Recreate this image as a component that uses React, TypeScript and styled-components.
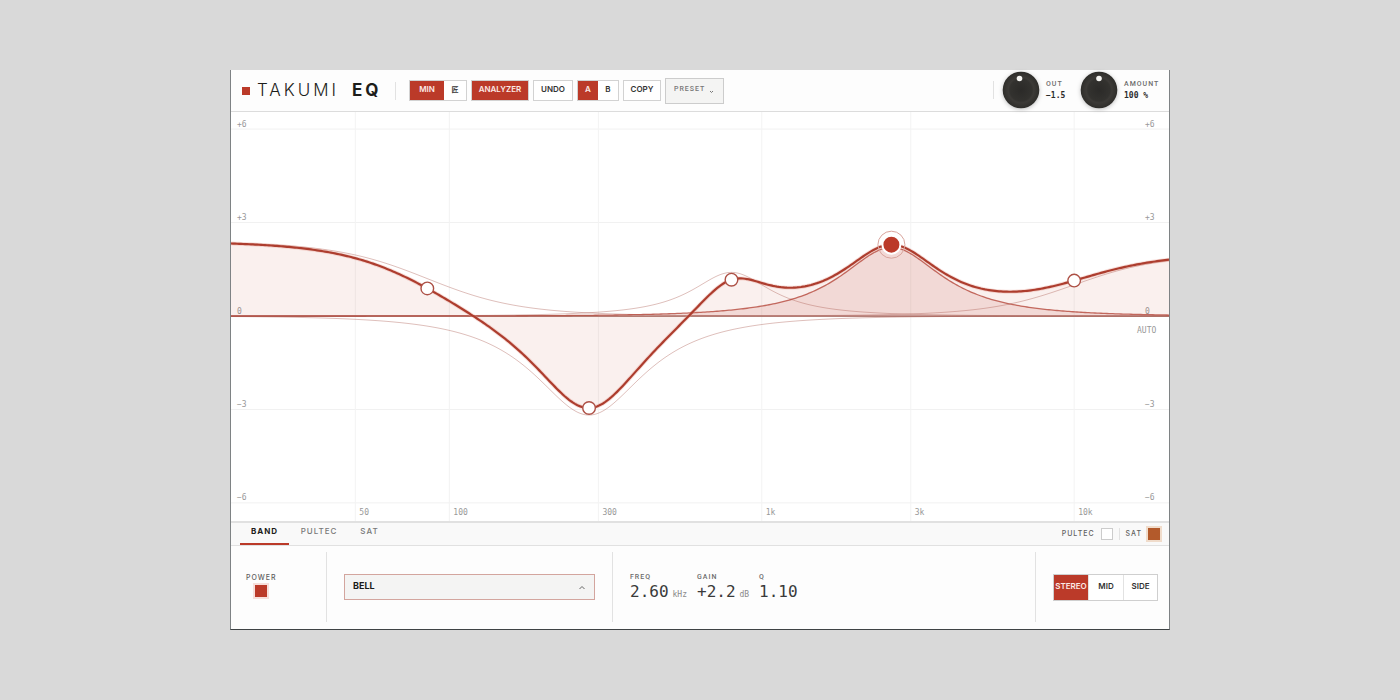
import React from "react";
import styled, { createGlobalStyle, css } from "styled-components";

const sans = `Inter, "Liberation Sans", "Noto Sans CJK JP", sans-serif`;
const label = `Roboto, "Liberation Sans", sans-serif`;
const mono = `"DejaVu Sans Mono", "Liberation Mono", monospace`;
const red = "#bb3a29";

const GlobalStyle = createGlobalStyle`
  *, *::before, *::after { box-sizing: border-box; }
  body { margin: 0; background: #d9d9d9; font-family: ${sans}; color: #1d1d1b; }
  button, select, input { font: inherit; color: inherit; margin: 0; border-radius: 0; }
`;

const Stage = styled.main`
  min-height: 100vh;
  display: flex;
  align-items: center;
  justify-content: center;
`;

const Plugin = styled.section`
  width: 100%;
  max-width: 940px;
  background: #fdfdfd;
  border: 1px solid #7e8284;
  border-top: 0;
  border-bottom-color: #3e4244;
`;

const Header = styled.header`
  display: flex;
  align-items: center;
  height: 42px;
  padding: 0 12px 0 11px;
  border-bottom: 1px solid #dcdcdc;
`;

const LogoMark = styled.span`
  width: 8px;
  height: 8px;
  margin-right: 7px;
  background: ${red};
`;

const Title = styled.h1`
  margin: 0;
  padding-bottom: 2px;
  width: 138px;
  font-size: 17px;
  line-height: 20px;
  font-weight: 300;
  letter-spacing: 3px;
  white-space: nowrap;
  strong { margin-left: 5px; font-weight: 700; }
`;

const Rule = styled.span<{ $tall?: boolean }>`
  width: 1px;
  height: ${(p) => (p.$tall ? "auto" : "18px")};
  align-self: ${(p) => (p.$tall ? "stretch" : "center")};
  background: #e2e2e2;
`;

const Tools = styled.div`
  display: flex;
  align-items: center;
  gap: 4px;
  margin-left: 13px;
`;

const Group = styled.div`
  display: flex;
  border: 1px solid #d2d2d2;
  background: #ffffff;
`;

const ToolButton = styled.button<{ $w: number; $on?: boolean; $bare?: boolean }>`
  flex: none;
  width: ${(p) => p.$w}px;
  height: ${(p) => (p.$bare ? 19 : 21)}px;
  padding: 0 0 3px;
  border: ${(p) => (p.$bare ? "0" : "1px solid #d2d2d2")};
  background: ${(p) => (p.$on ? red : "#ffffff")};
  color: ${(p) => (p.$on ? "#fbe9e6" : "#333333")};
  font-size: 8px;
  line-height: 10px;
  font-weight: 600;
  text-align: center;
  white-space: nowrap;
  &:lang(ja) { font-family: "Noto Sans CJK JP", sans-serif; font-size: 7px; font-weight: 700; }
`;

const SelectBox = styled.div<{ $large?: boolean }>`
  display: grid;
  align-items: center;
  width: ${(p) => (p.$large ? "251px" : "59px")};
  height: 26px;
  margin: ${(p) => (p.$large ? "0 17px" : "0")};
  border: 1px solid ${(p) => (p.$large ? "#d3a59e" : "#cccccc")};
  background: #f4f4f3;
  > * { grid-area: 1 / 1; }
  svg { justify-self: end; margin-right: ${(p) => (p.$large ? "8px" : "9px")}; pointer-events: none; }
`;

const Select = styled.select<{ $large?: boolean }>`
  appearance: none;
  width: 100%;
  height: 24px;
  padding: 0 0 3px 8px;
  border: 0;
  background: transparent;
  ${(p) =>
    p.$large
      ? css`font-size: 9px; font-weight: 700; color: #1a1a1a;`
      : css`font-family: ${label}; font-size: 7px; font-weight: 500; letter-spacing: 1px; color: #777777;`}
`;

const Knobs = styled.div`
  display: flex;
  align-items: center;
  margin-left: auto;
  padding-bottom: 1px;
`;

const KnobUnit = styled.div<{ $w: number }>`
  display: flex;
  align-items: center;
  gap: 6px;
  width: ${(p) => p.$w}px;
  margin-left: 8px;
`;

const Dial = styled.svg`
  flex: none;
  width: 38px;
  height: 38px;
  overflow: visible;
  filter: drop-shadow(0 1px 2px #00000040);
`;

const KnobText = styled.div`
  display: grid;
  gap: 3px;
  white-space: nowrap;
  output { font: 700 8px/10px ${mono}; color: #2c2c2c; }
`;

const Caption = styled.span`
  display: block;
  font-family: ${label};
  font-size: 7px;
  line-height: 8px;
  font-weight: 500;
  letter-spacing: 1px;
  color: #6c6c6c;
`;

const Chart = styled.svg`
  display: block;
  width: 100%;
  height: auto;
  background: #ffffff;
  text { font: 8px ${mono}; fill: #999999; }
`;

const TabBar = styled.div`
  display: flex;
  align-items: stretch;
  justify-content: space-between;
  height: 25px;
  padding: 0 9px;
  border-top: 2px solid #e1e1e1;
  border-bottom: 1px solid #e1e1e1;
  background: #f9f9f9;
`;

const Tabs = styled.nav`
  display: flex;
`;

const Tab = styled.button<{ $w: number; $on?: boolean }>`
  width: ${(p) => p.$w}px;
  padding: 0 0 4px;
  border: 0;
  border-bottom: 2px solid ${(p) => (p.$on ? red : "transparent")};
  background: none;
  font-size: 8px;
  line-height: 10px;
  font-weight: ${(p) => (p.$on ? 700 : 500)};
  letter-spacing: 1px;
  color: ${(p) => (p.$on ? "#1d1d1b" : "#777777")};
`;

const Switches = styled.div`
  display: flex;
  align-items: center;
  gap: 6px;
  ${Rule} { height: 12px; }
`;

const CheckLabel = styled.label<{ $stacked?: boolean }>`
  display: flex;
  flex-direction: ${(p) => (p.$stacked ? "column" : "row")};
  align-items: center;
  gap: ${(p) => (p.$stacked ? "3px" : "6px")};
  font-size: 7px;
  line-height: 8px;
  font-weight: 500;
  letter-spacing: 1px;
  color: #5f5f5f;
`;

const Check = styled.input<{ $tone?: string; $halo?: string }>`
  appearance: none;
  width: 12px;
  height: 12px;
  border: 1px solid #cccccc;
  background: #ffffff;
  &:checked {
    border-color: ${(p) => p.$tone};
    background: ${(p) => p.$tone};
    box-shadow: 0 0 0 2px ${(p) => p.$halo};
  }
`;

const Panel = styled.div`
  display: flex;
  align-items: center;
  height: 83px;
  padding: 6px 11px 7px 14px;
`;

const PowerCell = styled.div`
  display: flex;
  width: 81px;
  padding: 0 0 3px 1px;
`;

const Readouts = styled.dl`
  display: flex;
  margin: 0 auto 0 17px;
`;

const Readout = styled.div<{ $w: number }>`
  width: ${(p) => p.$w}px;
  dd { margin: 0; padding-top: 1px; font: 16px/20px ${mono}; color: #3a3a3a; white-space: nowrap; }
  small { margin-left: 4px; font-size: 8px; line-height: 8px; color: #8a8a8a; }
`;

const ModeGroup = styled.div`
  display: flex;
  margin-left: 17px;
  border: 1px solid #cfcfcf;
  background: #ffffff;
`;

const ModeButton = styled.button<{ $on?: boolean }>`
  width: 35px;
  height: 25px;
  padding: 0 0 2px;
  border: 0;
  border-right: 1px solid #e2e2e2;
  &:last-child { border-right: 0; width: 33px; }
  background: ${(p) => (p.$on ? red : "#ffffff")};
  color: ${(p) => (p.$on ? "#fbe9e6" : "#333333")};
  font-size: 8px;
  font-weight: 600;
`;

/* ---- response curves ---- */
const W = 938;
const H = 409;
const ZERO = 204;
const DB = 31.15;
const DECADE = 312.4;

type Kind = "low" | "bell" | "high";
type Band = { kind: Kind; f: number; gain: number; q: number };

const bands: Band[] = [
  { kind: "low", f: 85, gain: 2.4, q: 0.6 },
  { kind: "bell", f: 280, gain: -3.18, q: 1 },
  { kind: "bell", f: 800, gain: 1.4, q: 1.4 },
  { kind: "bell", f: 2600, gain: 2.2, q: 1.1 },
  { kind: "high", f: 10000, gain: 2, q: 0.62 },
];

const xOf = (f: number) => Math.log10(f / 20) * DECADE;
const yOf = (db: number) => ZERO - db * DB;

function response(b: Band, f: number): number {
  const a = Math.pow(10, b.gain / 40);
  const r = b.kind === "high" ? b.f / f : f / b.f;
  const y = r * r;
  if (b.kind === "bell") {
    const num = (1 - y) ** 2 + (y * a * a) / b.q ** 2;
    const den = (1 - y) ** 2 + y / (a * a * b.q ** 2);
    return 10 * Math.log10(num / den);
  }
  const mid = (a * y) / b.q ** 2;
  return 20 * Math.log10(a) + 10 * Math.log10(((a - y) ** 2 + mid) / ((1 - a * y) ** 2 + mid));
}

const total = (f: number) => bands.reduce((sum, b) => sum + response(b, f), 0);

function trace(fn: (f: number) => number): string {
  const points: string[] = [];
  for (let x = 0; x <= W; x += 2) {
    const f = 20 * Math.pow(10, x / DECADE);
    points.push(`${x},${yOf(fn(f)).toFixed(2)}`);
  }
  return "M" + points.join("L");
}

const area = (path: string) => `${path}L${W},${ZERO}L0,${ZERO}Z`;

const totalPath = trace(total);
const bandPaths = bands.map((b) => trace((f) => response(b, f)));
const ACTIVE = 3;

const levels = [
  { db: 6, text: "+6" },
  { db: 3, text: "+3" },
  { db: 0, text: "0" },
  { db: -3, text: "−3" },
  { db: -6, text: "−6" },
];
const freqs = [
  { f: 50, text: "50" },
  { f: 100, text: "100" },
  { f: 300, text: "300" },
  { f: 1000, text: "1k" },
  { f: 3000, text: "3k" },
  { f: 10000, text: "10k" },
];

function ResponseChart() {
  return (
    <Chart viewBox={`0 0 ${W} ${H}`} role="img" aria-label="Equalizer response">
      {levels.map((l) => (
        <line key={l.db} x1={0} x2={W} y1={yOf(l.db)} y2={yOf(l.db)} stroke="#f1f1f1" />
      ))}
      {freqs.map((t) => (
        <line key={t.f} x1={xOf(t.f)} x2={xOf(t.f)} y1={0} y2={H} stroke="#f3f3f3" />
      ))}
      {levels.map((l) => (
        <g key={l.db}>
          <text x={6} y={yOf(l.db) - 2.5}>{l.text}</text>
          <text x={914} y={yOf(l.db) - 2.5}>{l.text}</text>
        </g>
      ))}
      {freqs.map((t) => (
        <text key={t.f} x={xOf(t.f) + 4} y={403}>{t.text}</text>
      ))}
      <text x={906} y={221}>AUTO</text>
      <path d={area(totalPath)} fill={red} fillOpacity={0.08} />
      <path d={area(bandPaths[ACTIVE])} fill={red} fillOpacity={0.12} />
      <line x1={0} x2={W} y1={ZERO + 0.3} y2={ZERO + 0.3} stroke="#a2645b" strokeOpacity={0.75} strokeWidth={1.5} />
      {bandPaths.map((d, i) => (
        <path
          key={i}
          d={d}
          fill="none"
          stroke={i === ACTIVE ? "#b5493c" : "#a8564c"}
          strokeOpacity={i === ACTIVE ? 0.8 : 0.38}
          strokeWidth={i === ACTIVE ? 1.3 : 1}
        />
      ))}
      <path d={totalPath} fill="none" stroke="#e9a196" strokeOpacity={0.35} strokeWidth={4} />
      <path d={totalPath} fill="none" stroke="#ad3d2e" strokeWidth={2.2} />
      {bands.map((b, i) =>
        i === ACTIVE ? (
          <g key={i}>
            <circle cx={xOf(b.f)} cy={yOf(total(b.f))} r={13.5} fill="none" stroke="#d9a49c" />
            <circle cx={xOf(b.f)} cy={yOf(total(b.f))} r={9} fill={red} stroke="#ffffff" strokeWidth={2} />
          </g>
        ) : (
          <circle key={i} cx={xOf(b.f)} cy={yOf(total(b.f))} r={6.3} fill="#ffffff" stroke="#ad5045" strokeWidth={1.4} />
        ),
      )}
    </Chart>
  );
}

type KnobProps = { id: string; name: string; value: string; width: number; mark: number };

function Knob({ id, name, value, width, mark }: KnobProps) {
  return (
    <KnobUnit $w={width}>
      <Dial viewBox="0 0 38 38" aria-hidden="true">
        <defs>
          <radialGradient id={id}>
            <stop offset="0" stopColor="#2b2a28" />
            <stop offset="0.6" stopColor="#33322f" />
            <stop offset="0.7" stopColor="#3c3a37" />
            <stop offset="1" stopColor="#2e2d2a" />
          </radialGradient>
        </defs>
        <circle cx="19" cy="19" r="18.3" fill={`url(#${id})`} />
        <circle cx={mark} cy="7.5" r="2.8" fill="#f6f5f2" />
      </Dial>
      <KnobText>
        <Caption>{name}</Caption>
        <output>{value}</output>
      </KnobText>
    </KnobUnit>
  );
}

export default function App() {
  return (
    <>
      <GlobalStyle />
      <Stage>
        <Plugin>
          <Header>
            <LogoMark />
            <Title>TAKUMI <strong>EQ</strong></Title>
            <Rule />
            <Tools>
              <Group>
                <ToolButton $w={34} $bare $on>MIN</ToolButton>
                <ToolButton $w={22} $bare lang="ja">匠</ToolButton>
              </Group>
              <ToolButton $w={58} $on>ANALYZER</ToolButton>
              <ToolButton $w={40}>UNDO</ToolButton>
              <Group>
                <ToolButton $w={20} $bare $on>A</ToolButton>
                <ToolButton $w={20} $bare>B</ToolButton>
              </Group>
              <ToolButton $w={38}>COPY</ToolButton>
              <SelectBox>
                <Select aria-label="Preset" defaultValue="PRESET"><option>PRESET</option></Select>
                <svg width="5" height="4" viewBox="0 0 5 4" aria-hidden="true">
                  <path d="M1 2L2.5 3.5L4 2" fill="none" stroke="#777777" />
                </svg>
              </SelectBox>
            </Tools>
            <Knobs>
              <Rule />
              <Knob id="out" name="OUT" value="−1.5" width={70} mark={17.5} />
              <Knob id="amount" name="AMOUNT" value="100 %" width={77} mark={19} />
            </Knobs>
          </Header>
          <ResponseChart />
          <TabBar>
            <Tabs>
              <Tab $w={49} $on>BAND</Tab>
              <Tab $w={60}>PULTEC</Tab>
              <Tab $w={41}>SAT</Tab>
            </Tabs>
            <Switches>
              <CheckLabel>PULTEC <Check type="checkbox" /></CheckLabel>
              <Rule />
              <CheckLabel>SAT <Check type="checkbox" defaultChecked $tone="#b35a2b" $halo="#f0dccb" /></CheckLabel>
            </Switches>
          </TabBar>
          <Panel>
            <PowerCell>
              <CheckLabel $stacked>POWER <Check type="checkbox" defaultChecked $tone={red} $halo="#f7dfdb" /></CheckLabel>
            </PowerCell>
            <Rule $tall />
            <SelectBox $large>
              <Select $large aria-label="Band shape" defaultValue="BELL"><option>BELL</option></Select>
              <svg width="8" height="5" viewBox="0 0 8 5" aria-hidden="true">
                <path d="M1.5 4L4 1.5L6.5 4" fill="none" stroke="#666666" />
              </svg>
            </SelectBox>
            <Rule $tall />
            <Readouts>
              <Readout $w={67}><Caption as="dt">FREQ</Caption><dd>2.60<small>kHz</small></dd></Readout>
              <Readout $w={62}><Caption as="dt">GAIN</Caption><dd>+2.2<small>dB</small></dd></Readout>
              <Readout $w={42}><Caption as="dt">Q</Caption><dd>1.10</dd></Readout>
            </Readouts>
            <Rule $tall />
            <ModeGroup>
              <ModeButton $on>STEREO</ModeButton>
              <ModeButton>MID</ModeButton>
              <ModeButton>SIDE</ModeButton>
            </ModeGroup>
          </Panel>
        </Plugin>
      </Stage>
    </>
  );
}
